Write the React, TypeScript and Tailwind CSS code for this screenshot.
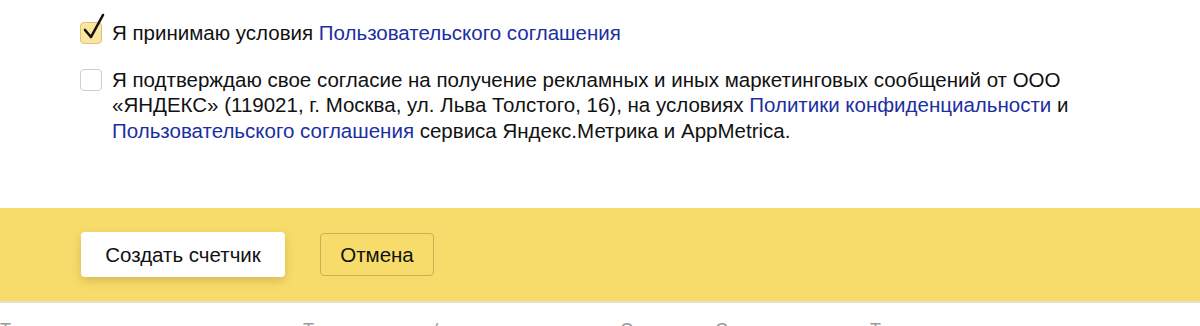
import React from 'react'

const link = 'text-[#1c2f9f]'

function CheckBox({checked}: {checked?: boolean}) {
  return (
    <span className="relative mt-[2px] block h-[22px] w-[22px] shrink-0">
      <span
        className={
          checked
            ? 'block h-full w-full rounded-[4px] border border-[#d9c47a] bg-[#fbe6a0]'
            : 'block h-full w-full rounded-[4px] border border-[#cfcfcf] bg-white'
        }
      />
      {checked && (
        <svg
          viewBox="0 0 24 28"
          className="absolute left-[2px] top-[-9px] h-[28px] w-[24px]"
        >
          <path
            d="M3 17 L9 24 L21 2"
            fill="none"
            stroke="#111"
            strokeWidth="2.6"
            strokeLinecap="round"
            strokeLinejoin="round"
          />
        </svg>
      )}
    </span>
  )
}

export default function App() {
  return (
    <div className="h-[326px] w-[1200px] overflow-hidden bg-white font-['Liberation_Sans',Arial,sans-serif] text-[20.5px] leading-[25.5px] text-[#111]">
      <div className="flex h-[208px] flex-col gap-[21px] pl-[80px] pr-[60px] pt-[20px]">
        <label className="flex gap-[10px]">
          <CheckBox checked />
          <span>
            Я принимаю условия{' '}
            <span className={link}>Пользовательского соглашения</span>
          </span>
        </label>
        <label className="flex gap-[10px]">
          <CheckBox />
          <span className="max-w-[990px]">
            Я подтверждаю свое согласие на получение рекламных и иных
            маркетинговых сообщений от ООО «ЯНДЕКС» (119021, г. Москва, ул.
            Льва Толстого, 16), на условиях{' '}
            <span className={link}>Политики конфиденциальности</span> и{' '}
            <span className={link}>Пользовательского соглашения</span> сервиса
            Яндекс.Метрика и AppMetrica.
          </span>
        </label>
      </div>
      <div className="flex h-[95px] items-center gap-[35px] border-b-2 border-[#e4e0d2] bg-[#f8dc6b] pl-[81px]">
        <button className="h-[45px] w-[204px] rounded-[4px] bg-white text-[20.5px] text-[#111] shadow-[0_4px_10px_rgba(120,90,0,0.25)]">
          Создать счетчик
        </button>
        <button className="h-[43px] w-[114px] rounded-[4px] border border-[#c9b153] bg-[#f8dc6b] text-[20.5px] text-[#111]">
          Отмена
        </button>
      </div>
      <div className="mt-[15px] flex text-[18px] text-[#999]">
        <span className="w-[303px]">Т</span>
        <span className="w-[130px]">Т</span>
        <span className="w-[187px]">/</span>
        <span className="w-[95px]">С</span>
        <span className="w-[155px]">С</span>
        <span>Т</span>
      </div>
    </div>
  )
}
